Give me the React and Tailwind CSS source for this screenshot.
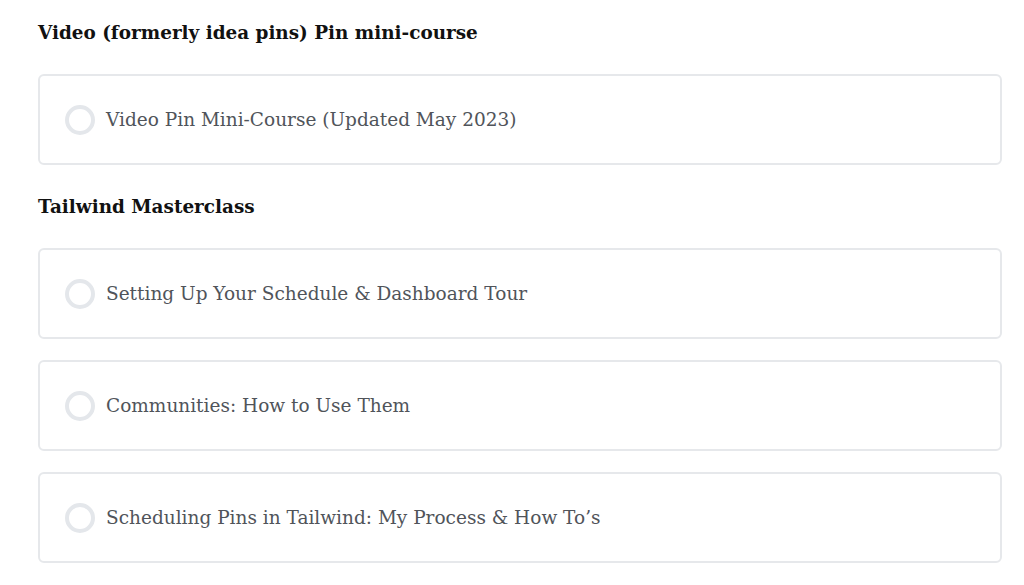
const sections = [
  {
    title: "Video (formerly idea pins) Pin mini-course",
    lessons: ["Video Pin Mini-Course (Updated May 2023)"],
  },
  {
    title: "Tailwind Masterclass",
    lessons: [
      "Setting Up Your Schedule & Dashboard Tour",
      "Communities: How to Use Them",
      "Scheduling Pins in Tailwind: My Process & How To’s",
    ],
  },
];

function Lesson({ label }) {
  return (
    <div className="flex h-[91px] items-center gap-[11px] rounded-[6px] border-2 border-[#e6e8eb] bg-white pl-[25px]">
      <span className="h-[30px] w-[30px] shrink-0 rounded-full border-[4px] border-[#e4e7eb]" />
      <span className="text-[18.5px] leading-[28px] text-[#50545a]">{label}</span>
    </div>
  );
}

export default function App() {
  return (
    <div
      className="min-h-[585px] bg-white pl-[38px] pr-[22px] pt-[19px]"
      style={{ fontFamily: '"DejaVu Serif", "Liberation Serif", serif' }}
    >
      {sections.map((s, i) => (
        <section key={s.title} className={i > 0 ? "mt-[28px]" : ""}>
          <h3 className="mb-[27px] text-[18.4px] font-bold leading-[28px] text-[#111]">{s.title}</h3>
          <div className="flex flex-col gap-[21px]">
            {s.lessons.map((l) => (
              <Lesson key={l} label={l} />
            ))}
          </div>
        </section>
      ))}
    </div>
  );
}
